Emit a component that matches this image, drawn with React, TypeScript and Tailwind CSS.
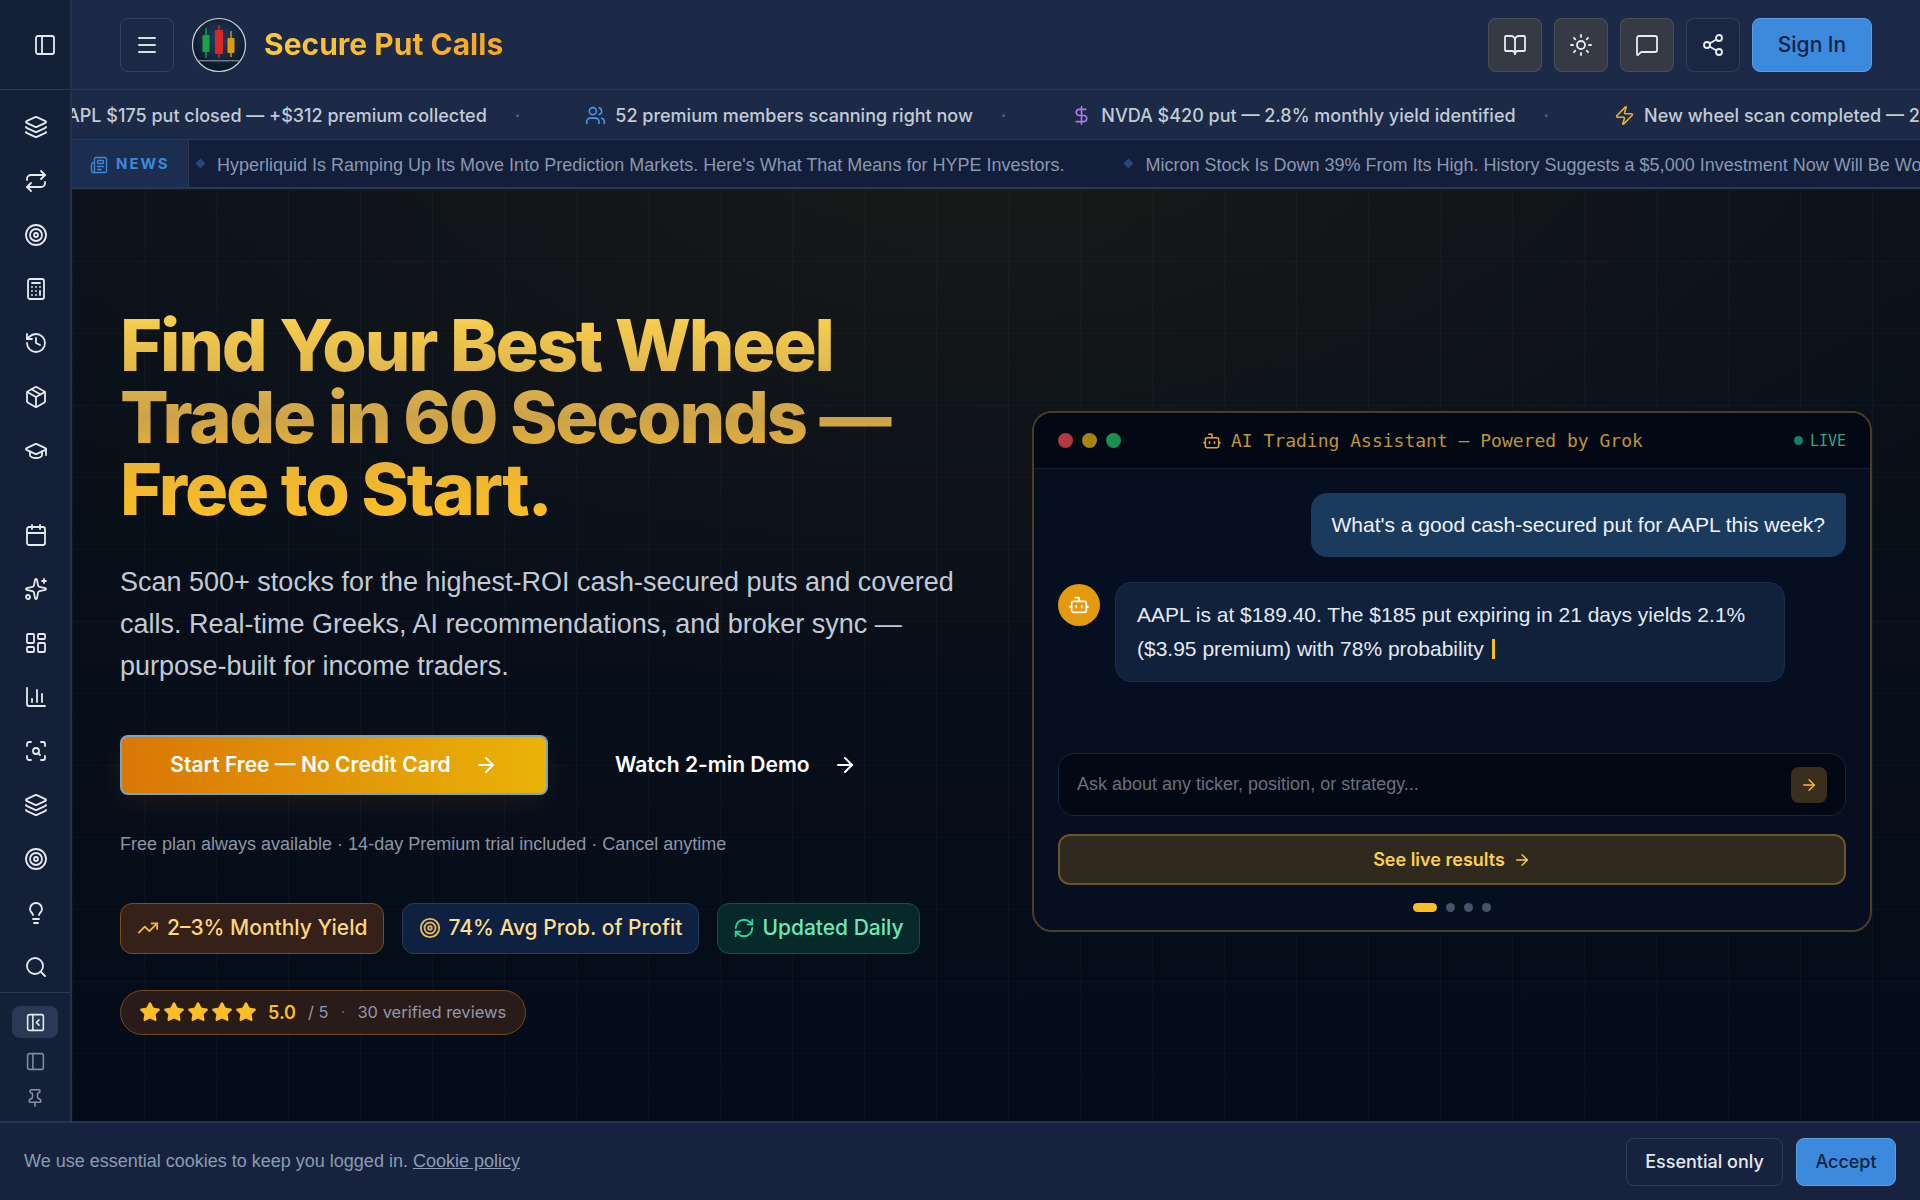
import {
    ArrowRight,
    Bot,
    BookOpen,
    Calculator,
    Calendar,
    ChartColumn,
    DollarSign,
    GraduationCap,
    History,
    Layers,
    LayoutDashboard,
    Lightbulb,
    Menu,
    MessageSquare,
    Newspaper,
    Package,
    PanelLeft,
    PanelLeftClose,
    Pin,
    RefreshCw,
    Repeat,
    ScanSearch,
    Search,
    Share2,
    Sparkles,
    Star,
    Sun,
    Target,
    TrendingUp,
    Users,
    Zap,
} from 'lucide-react';

const topNav = [Layers, Repeat, Target, Calculator, History, Package, GraduationCap];
const toolNav = [Calendar, Sparkles, LayoutDashboard, ChartColumn, ScanSearch, Layers, Target, Lightbulb, Search];

const iconButton =
    'flex h-[54px] w-[54px] items-center justify-center rounded-lg border border-white/10 text-[#e8ebf0]';
const bodyFont = "[font-family:'Liberation_Sans',sans-serif]";
const monoFont = "[font-family:'DejaVu_Sans_Mono',monospace]";

function Logo() {
    return (
        <svg viewBox="0 0 56 56" className="h-[56px] w-[56px]">
            <defs>
                <radialGradient id="logoBg" cx="50%" cy="40%" r="60%">
                    <stop offset="0%" stopColor="#23405f" />
                    <stop offset="100%" stopColor="#0b1424" />
                </radialGradient>
            </defs>
            <circle cx="28" cy="28" r="26.5" fill="url(#logoBg)" stroke="#c8d0dc" strokeWidth="1.2" />
            <path d="M15 11v30" stroke="#16a34a" strokeWidth="1.4" />
            <rect x="11.5" y="18" width="7" height="17" rx="1" fill="#16a34a" />
            <path d="M28 8v33" stroke="#dc2626" strokeWidth="1.4" />
            <rect x="24" y="13" width="8" height="24" rx="1" fill="#dc2626" />
            <path d="M40 14v26" stroke="#d99a1c" strokeWidth="1.4" />
            <rect x="36.5" y="21" width="7" height="15" rx="1" fill="#d99a1c" />
            <rect x="8" y="43" width="40" height="1.4" fill="#9aa5b5" opacity="0.7" />
        </svg>
    );
}

function Sidebar() {
    return (
        <aside className="flex w-[72px] shrink-0 flex-col border-r-2 border-[#24324f] bg-[#141f38] text-[#e6e9ef]">
            <div className="flex h-[90px] shrink-0 items-center border-b border-[#2a3854] pl-[33px]">
                <PanelLeft className="h-6 w-6" strokeWidth={1.8} />
            </div>
            <div className="flex flex-col items-center gap-[30px] pl-[1px] pt-[25px]">
                {topNav.map((Icon, i) => (
                    <Icon key={i} className="h-6 w-6" strokeWidth={1.8} />
                ))}
            </div>
            <div className="mt-[60px] flex flex-col items-center gap-[30px] pl-[1px]">
                {toolNav.map((Icon, i) => (
                    <Icon key={i} className="h-6 w-6" strokeWidth={1.8} />
                ))}
            </div>
            <div className="mt-[13px] flex flex-1 flex-col items-center gap-[13px] border-t border-[#2a3854] pt-[13px]">
                <div className="flex h-[32px] w-[46px] items-center justify-center rounded-lg bg-[#2a3956]">
                    <PanelLeftClose className="h-[21px] w-[21px]" strokeWidth={1.8} />
                </div>
                <PanelLeft className="h-[21px] w-[21px] text-[#7e8aa0]" strokeWidth={1.8} />
                <Pin className="mt-[3px] h-[20px] w-[20px] text-[#8793a8]" strokeWidth={1.8} />
            </div>
        </aside>
    );
}

function TopBar() {
    return (
        <header className="flex h-[90px] shrink-0 items-center border-b border-[#2a3854] bg-[#1c2a47] pl-12 pr-12">
            <button className="flex h-[54px] w-[54px] items-center justify-center rounded-lg border border-[#33425f] text-[#d9dde5]">
                <Menu className="h-6 w-6" strokeWidth={2} />
            </button>
            <div className="ml-[17px]">
                <Logo />
            </div>
            <span className="ml-[17px] bg-[linear-gradient(90deg,#fbc93d,#f5a623)] bg-clip-text text-[30px] font-bold text-transparent">
                Secure Put Calls
            </span>
            <div className="ml-auto flex items-center gap-[12px]">
                <button className={`${iconButton} bg-[#353a45]`}>
                    <BookOpen className="h-6 w-6" strokeWidth={1.8} />
                </button>
                <button className={`${iconButton} bg-[#353a45]`}>
                    <Sun className="h-6 w-6" strokeWidth={1.8} />
                </button>
                <button className={`${iconButton} bg-[#353a45]`}>
                    <MessageSquare className="h-6 w-6" strokeWidth={1.8} />
                </button>
                <button className={`${iconButton} bg-[#1a2742]`}>
                    <Share2 className="h-6 w-6" strokeWidth={1.8} />
                </button>
                <button className="h-[54px] w-[120px] rounded-lg border border-[#5a9fe6] bg-[#3b8ade] text-[21px] font-medium text-[#0f2340]">
                    Sign In
                </button>
            </div>
        </header>
    );
}

function Ticker() {
    return (
        <div className="flex h-[50px] shrink-0 items-center overflow-hidden whitespace-nowrap border-b border-[#2a3854] bg-[#1c2a47] pt-[2px] text-[18px] font-medium text-[#c3cad6]">
            <span className="ml-[-18px] shrink-0">AAPL $175 put closed — +$312 premium collected</span>
            <span className="mx-[28px] shrink-0 text-[#566582]">·</span>
            <span className="ml-[37px] flex shrink-0 items-center gap-[9px]">
                <Users className="h-[21px] w-[21px] text-[#4f94e6]" strokeWidth={1.8} />
                52 premium members scanning right now
            </span>
            <span className="mx-[28px] shrink-0 text-[#566582]">·</span>
            <span className="ml-[37px] flex shrink-0 items-center gap-[9px]">
                <DollarSign className="h-[21px] w-[21px] text-[#b07ce8]" strokeWidth={1.8} />
                NVDA $420 put — 2.8% monthly yield identified
            </span>
            <span className="mx-[28px] shrink-0 text-[#566582]">·</span>
            <span className="ml-[37px] flex shrink-0 items-center gap-[9px]">
                <Zap className="h-[21px] w-[21px] text-[#eab32c]" strokeWidth={1.8} />
                New wheel scan completed — 247 results
            </span>
        </div>
    );
}

function NewsBar() {
    return (
        <div className="flex h-[49px] shrink-0 items-center overflow-hidden whitespace-nowrap border-b-2 border-[#2a3854] bg-[#19264a]/70 text-[18px] text-[#8a98ae]">
            <div className="flex h-full w-[117px] shrink-0 items-center gap-[8px] border-r border-[#2a3854] bg-[#1c2e50] pl-[18px] pt-[2px]">
                <Newspaper className="h-[18px] w-[18px] text-[#3f87d8]" strokeWidth={1.8} />
                <span className="text-[15px] font-bold tracking-[0.13em] text-[#3f87d8]">NEWS</span>
            </div>
            <span className="ml-[8px] h-[7px] w-[7px] shrink-0 rotate-45 bg-[#23497c]" />
            <span className={`ml-[13px] shrink-0 pt-[3px] ${bodyFont}`}>
                Hyperliquid Is Ramping Up Its Move Into Prediction Markets. Here's What That Means for HYPE Investors.
            </span>
            <span className="ml-[61px] h-[7px] w-[7px] shrink-0 rotate-45 bg-[#23497c]" />
            <span className={`ml-[13px] shrink-0 pt-[3px] ${bodyFont}`}>
                Micron Stock Is Down 39% From Its High. History Suggests a $5,000 Investment Now Will Be Worth This Much
            </span>
        </div>
    );
}

function HeroCopy() {
    return (
        <div>
            <h1 className="bg-[linear-gradient(180deg,#fbd14e_0%,#e0b64c_30%,#cda348_50%,#e8b236_68%,#fbbf24_100%)] bg-clip-text text-[72px] font-extrabold leading-[72px] tracking-[-0.03em] text-transparent">
                Find Your Best Wheel
                <br />
                Trade in 60 Seconds —
                <br />
                Free to Start.
            </h1>
            <p className={`mt-[36px] text-[27px] leading-[42px] text-[#c2cad6] ${bodyFont}`}>
                Scan 500+ stocks for the highest-ROI cash-secured puts and covered calls. Real-time Greeks, AI
                recommendations, and broker sync — purpose-built for income traders.
            </p>
            <div className="mt-[48px] flex items-center">
                <button className="flex h-[60px] w-[428px] items-center justify-center gap-[23px] rounded-lg border-2 border-[#7aa4c4] bg-[linear-gradient(90deg,#d97706,#eab308)] text-[21px] font-semibold text-white shadow-[0_8px_30px_rgba(217,119,6,0.1)]">
                    Start Free — No Credit Card
                    <ArrowRight className="h-6 w-6" strokeWidth={2} />
                </button>
                <button className="ml-[67px] flex items-center gap-[23px] text-[21px] font-semibold text-white">
                    Watch 2-min Demo
                    <ArrowRight className="h-6 w-6" strokeWidth={2} />
                </button>
            </div>
            <p className={`mt-[38px] text-[18px] leading-[22px] text-[#8b95a6] ${bodyFont}`}>
                Free plan always available · 14-day Premium trial included · Cancel anytime
            </p>
            <div className="mt-[48px] flex gap-[18px]">
                <div className="flex h-[51px] items-center gap-[8px] rounded-xl border border-[#7c4d1e] bg-[#35201a] px-[16px] text-[21px] font-medium text-[#fcd67a]">
                    <TrendingUp className="h-[22px] w-[22px] text-[#f5b83d]" strokeWidth={2} />
                    2–3% Monthly Yield
                </div>
                <div className="flex h-[51px] items-center gap-[7px] rounded-xl border border-[#2b3c5c] bg-[#0e2140] px-[16px] text-[21px] font-medium text-[#fcdf8f]">
                    <Target className="h-[22px] w-[22px] text-[#e9bd5a]" strokeWidth={2} />
                    74% Avg Prob. of Profit
                </div>
                <div className="flex h-[51px] items-center gap-[7px] rounded-xl border border-[#12523f] bg-[#06292a] px-[15px] text-[21px] font-medium text-[#6ee7b7]">
                    <RefreshCw className="h-[22px] w-[22px] text-[#34d399]" strokeWidth={2} />
                    Updated Daily
                </div>
            </div>
            <div className="mt-[36px] inline-flex h-[45px] items-center rounded-full border border-[#6e4a20] bg-[#291b18] pl-[18px] pr-[19px] text-[16.5px] text-[#8f99aa]">
                <span className="flex gap-[2px]">
                    {[0, 1, 2, 3, 4].map((i) => (
                        <Star key={i} className="h-[22px] w-[22px] fill-[#fbbf24] text-[#fbbf24]" strokeWidth={1.5} />
                    ))}
                </span>
                <span className="ml-[11px] text-[18px] font-semibold text-[#fbbf24]">5.0</span>
                <span className="ml-[12px]">/ 5</span>
                <span className="mx-[12px] text-[#566075]">·</span>
                <span>30 verified reviews</span>
            </div>
        </div>
    );
}

function ChatPanel() {
    return (
        <div className="overflow-hidden rounded-[20px] border-2 border-[#4a3d26] bg-[#060f1f]">
            <div className="flex h-[56px] items-center border-b border-[#131d30] bg-[#030914] px-[24px]">
                <div className="flex gap-[9px]">
                    <span className="h-[15px] w-[15px] rounded-full bg-[#b23a3f]" />
                    <span className="h-[15px] w-[15px] rounded-full bg-[#a9830f]" />
                    <span className="h-[15px] w-[15px] rounded-full bg-[#16914f]" />
                </div>
                <div className={`ml-[81px] flex items-center gap-[9px] text-[18px] leading-[22px] text-[#bd943a] ${monoFont}`}>
                    <Bot className="h-[20px] w-[20px] text-[#e0a52e]" strokeWidth={1.8} />
                    AI Trading Assistant — Powered by Grok
                </div>
                <div className={`ml-auto flex items-center gap-[7px] text-[15px] leading-[20px] text-[#2fa58a] ${monoFont}`}>
                    <span className="h-[9px] w-[9px] rounded-full bg-[#157f68]" />
                    LIVE
                </div>
            </div>
            <div className="px-[24px] pb-[18px] pt-[24px]">
                <div className="flex justify-end">
                    <div className={`rounded-2xl rounded-tr-[4px] bg-[#1a3a5e] px-[21px] py-[16px] text-[21px] leading-[32px] text-[#eef2f7] ${bodyFont}`}>
                        What's a good cash-secured put for AAPL this week?
                    </div>
                </div>
                <div className="mt-[25px] flex items-start gap-[15px]">
                    <div className="mt-[2px] flex h-[42px] w-[42px] shrink-0 items-center justify-center rounded-full bg-[#e39a0d] text-white">
                        <Bot className="h-[22px] w-[22px]" strokeWidth={1.8} />
                    </div>
                    <div className={`w-[670px] rounded-2xl border border-[#1b2c48] bg-[#0f213b] px-[21px] py-[15px] text-[21px] leading-[34px] text-[#e4e9f0] ${bodyFont}`}>
                        AAPL is at $189.40. The $185 put expiring in 21 days yields 2.1% ($3.95 premium) with 78%
                        probability
                        <span className="ml-[8px] inline-block h-[20px] w-[3px] translate-y-[3px] bg-[#fbbf24]" />
                    </div>
                </div>
                <div className="mt-[71px] flex h-[63px] items-center rounded-2xl border border-[#172338] bg-[#030914] pl-[18px] pr-[18px]">
                    <input
                        readOnly
                        placeholder="Ask about any ticker, position, or strategy..."
                        className={`flex-1 bg-transparent text-[18px] outline-none placeholder:text-[#667081] ${bodyFont}`}
                    />
                    <div className="flex h-[36px] w-[36px] items-center justify-center rounded-lg bg-[#3a2e1d] text-[#fbbf24]">
                        <ArrowRight className="h-[18px] w-[18px]" strokeWidth={1.8} />
                    </div>
                </div>
                <button className="mt-[18px] flex h-[51px] w-full items-center justify-center gap-[8px] rounded-xl border-2 border-[#6b5527] bg-[#2f2a1d] text-[18px] font-semibold text-[#fbcf4f]">
                    See live results
                    <ArrowRight className="h-[18px] w-[18px]" strokeWidth={1.8} />
                </button>
                <div className="mt-[18px] flex items-center justify-center gap-[9px]">
                    <span className="h-[9px] w-[24px] rounded-full bg-[#fbbf24]" />
                    <span className="h-[9px] w-[9px] rounded-full bg-[#46536a]" />
                    <span className="h-[9px] w-[9px] rounded-full bg-[#46536a]" />
                    <span className="h-[9px] w-[9px] rounded-full bg-[#46536a]" />
                </div>
            </div>
        </div>
    );
}

function CookieBar() {
    return (
        <div className="flex h-[79px] shrink-0 items-center justify-between border-t-2 border-[#26344f] bg-[#17233e] pl-[24px] pr-[24px]">
            <p className={`text-[18px] text-[#8b9bb4] ${bodyFont}`}>
                We use essential cookies to keep you logged in. <span className="underline">Cookie policy</span>
            </p>
            <div className="flex gap-[13px]">
                <button className="h-[48px] w-[157px] rounded-lg border border-[#2e3c58] text-[18px] font-medium text-[#e4e8ee]">
                    Essential only
                </button>
                <button className="h-[48px] w-[100px] rounded-lg border border-[#5a9fe6] bg-[#3b8ade] text-[18px] font-medium text-[#0f2340]">
                    Accept
                </button>
            </div>
        </div>
    );
}

export default function App() {
    return (
        <div className="flex h-screen w-full flex-col overflow-hidden bg-[#050b17] text-white [font-family:Inter,sans-serif]">
            <div className="flex min-h-0 flex-1">
                <Sidebar />
                <main className="flex min-w-0 flex-1 flex-col">
                    <TopBar />
                    <Ticker />
                    <NewsBar />
                    <section className="grid flex-1 grid-cols-[864px_1fr] items-center gap-12 bg-[linear-gradient(90deg,rgba(255,255,255,0.025)_1px,transparent_1px),linear-gradient(180deg,rgba(255,255,255,0.025)_1px,transparent_1px),radial-gradient(ellipse_60%_55%_at_50%_0%,rgba(245,158,11,0.06),transparent),linear-gradient(180deg,#0a1119,#040c1a)] bg-[size:72px_72px,72px_72px,100%_100%,100%_100%] pl-12 pr-12 pt-[33px]">
                        <HeroCopy />
                        <ChatPanel />
                    </section>
                </main>
            </div>
            <CookieBar />
        </div>
    );
}
